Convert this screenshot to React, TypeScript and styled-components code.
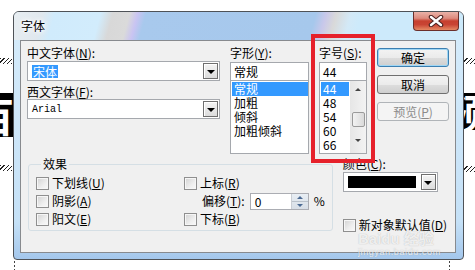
import styled, { createGlobalStyle, css } from "styled-components";

const GlobalStyle = createGlobalStyle`
  html, body {
    margin: 0;
    padding: 0;
    background: #fff;
  }
  body {
    width: 475px;
    height: 270px;
    overflow: hidden;
    font-family: "Noto Sans CJK SC", "Noto Sans", sans-serif;
    font-size: 12px;
    color: #000;
  }
`;

const Desk = styled.div`
  position: relative;
  width: 475px;
  height: 270px;
  overflow: hidden;
  background: #fff;
`;

// page content behind the dialog, only its edges show
const Band = styled.div<{ $side: "left" | "right"; $top: number; $h: number }>`
  position: absolute;
  top: ${(p) => p.$top}px;
  height: ${(p) => p.$h}px;
  width: ${(p) => (p.$side === "left" ? 13 : 12)}px;
  ${(p) => (p.$side === "left" ? "left: 0;" : "right: 0;")}
  background: #000;
  overflow: hidden;
  display: flex;
  align-items: center;
  justify-content: ${(p) => (p.$side === "left" ? "flex-end" : "flex-start")};
  color: #fff;
  font-size: 40px;
  font-weight: bold;
  line-height: 40px;
  span {
    flex: none;
    margin: ${(p) => (p.$side === "left" ? "0 -1px 0 0" : "0 0 0 -16px")};
  }
`;

const Hatch = styled.div<{ $side: "left" | "right"; $top: number }>`
  position: absolute;
  top: ${(p) => p.$top}px;
  ${(p) => (p.$side === "left" ? "left: 0;" : "right: 0;")}
  width: 12px;
  height: 6px;
  background: repeating-linear-gradient(
    -45deg,
    #222 0px,
    #222 1px,
    transparent 1px,
    transparent 3px
  );
`;

const DashLine = styled.div<{ $left: number }>`
  position: absolute;
  left: ${(p) => p.$left}px;
  top: 261px;
  width: 1px;
  height: 9px;
  background: repeating-linear-gradient(to bottom, #444 0 2px, transparent 2px 4px);
`;

const Window = styled.div`
  position: absolute;
  left: 13px;
  top: 11px;
  width: 451px;
  height: 249px;
  box-sizing: border-box;
  border: 1px solid #4e5257;
  border-radius: 6px 6px 4px 4px;
  background: linear-gradient(to bottom, #d6ecfb 0%, #c5e1f7 85%, #a4c7ec 100%);
  display: flex;
  flex-direction: column;
`;

const TitleBar = styled.div`
  height: 28px;
  flex: none;
  display: flex;
  justify-content: space-between;
  align-items: flex-start;
  border-radius: 5px 5px 0 0;
  background: linear-gradient(
    105deg,
    #e8eef2 0px,
    #e0e8ee 28px,
    #d0ebfc 40px,
    #d2ecfc 84px,
    #d8d8d8 96px,
    #dadada 112px,
    #c9c4f2 120px,
    #a8c9ed 128px,
    #a6c8ec 292px,
    #c9c8ea 302px,
    #d9d9d9 312px,
    #d3e9f7 326px,
    #cdeafb 336px,
    #cdeafb 100%
  );
`;

const Title = styled.div`
  margin: 7px 0 0 7px;
  line-height: 14px;
  text-shadow: 0 0 6px #fff, 0 0 6px #fff, 0 0 3px #fff;
`;

const CloseButton = styled.div`
  width: 46px;
  height: 19px;
  margin-right: 4px;
  box-sizing: border-box;
  border: 1px solid #6b2f2b;
  border-top: none;
  border-radius: 0 0 4px 4px;
  background: linear-gradient(
    to bottom,
    #eab2a8 0%,
    #dd8a7d 35%,
    #c7402f 50%,
    #c94434 70%,
    #e58a64 100%
  );
  display: flex;
  align-items: center;
  justify-content: center;
`;

const Client = styled.div`
  flex: 1;
  margin: 0 7px 6px 6px;
  box-sizing: border-box;
  border: 1px solid #878a8e;
  background: #f0f0f0;
  padding: 5px 0 0 6px;
`;

const TopRow = styled.div`
  display: flex;
  align-items: flex-start;
  gap: 10px;
`;

const Column = styled.div<{ $w: number }>`
  width: ${(p) => p.$w}px;
  flex: none;
  display: flex;
  flex-direction: column;
`;

const ButtonColumn = styled(Column)`
  padding-top: 2px;
  gap: 8px;
`;

const Label = styled.div<{ $mt?: number; $mb?: number }>`
  line-height: 14px;
  height: 14px;
  white-space: nowrap;
  margin-top: ${(p) => p.$mt ?? 0}px;
  margin-bottom: ${(p) => p.$mb ?? 0}px;
`;

const Combo = styled.div<{ $mono?: boolean }>`
  height: 20px;
  box-sizing: border-box;
  border: 1px solid #a5a8ad;
  background: #fff;
  display: flex;
  align-items: center;
  padding: 0 1px 0 4px;
  ${(p) =>
    p.$mono &&
    css`
      font-family: "Liberation Mono", "DejaVu Sans Mono", monospace;
      font-size: 10px;
    `}
`;

const Selected = styled.span`
  background: #3399ff;
  color: #fff;
  line-height: 13px;
  padding: 0 1px;
`;

const DropButton = styled.div`
  margin-left: auto;
  width: 15px;
  height: 16px;
  box-sizing: border-box;
  border: 1px solid #6f6f6f;
  background: linear-gradient(to bottom, #f4f4f4, #dcdcdc);
  box-shadow: inset 1px 1px 0 #fff;
  display: flex;
  align-items: center;
  justify-content: center;
  &::after {
    content: "";
    width: 0;
    height: 0;
    margin-top: 1px;
    border-left: 4px solid transparent;
    border-right: 4px solid transparent;
    border-top: 4px solid #000;
  }
`;

const TextBox = styled.div`
  height: 19px;
  box-sizing: border-box;
  border: 1px solid #a5a8ad;
  background: #fff;
  line-height: 17px;
  padding-left: 3px;
`;

const ListBox = styled.div`
  height: 74px;
  margin-top: -1px;
  box-sizing: border-box;
  border: 1px solid #a5a8ad;
  background: #fff;
  display: flex;
  padding: 1px 0 0 1px;
  overflow: hidden;
`;

const Items = styled.div`
  flex: 1;
  display: flex;
  flex-direction: column;
`;

const Item = styled.div<{ $on?: boolean }>`
  line-height: 14px;
  height: 14px;
  padding-left: 2px;
  white-space: nowrap;
  ${(p) =>
    p.$on &&
    css`
      background: #3399ff;
      color: #fff;
    `}
`;

const ScrollBar = styled.div`
  width: 16px;
  margin: -1px 0 0 1px;
  flex: none;
  background: linear-gradient(to right, #e6e6e6, #f3f3f3);
  display: flex;
  flex-direction: column;
  align-items: center;
`;

const Arrow = styled.div<{ $down?: boolean }>`
  width: 0;
  height: 0;
  margin-top: ${(p) => (p.$down ? 12 : 7)}px;
  border-left: 3px solid transparent;
  border-right: 3px solid transparent;
  ${(p) => (p.$down ? "border-top: 3px solid #444;" : "border-bottom: 3px solid #444;")}
`;

const Thumb = styled.div`
  width: 13px;
  height: 15px;
  margin-top: 21px;
  box-sizing: border-box;
  border: 1px solid #9a9a9a;
  border-radius: 2px;
  background: linear-gradient(to right, #f2f2f2, #dadada);
`;

const Button = styled.div<{ $variant?: "default" | "disabled" }>`
  height: 19px;
  box-sizing: border-box;
  border: 1px solid #707070;
  border-radius: 3px;
  background: linear-gradient(to bottom, #f3f3f3 0%, #ebebeb 50%, #dddddd 51%, #cfcfcf 100%);
  text-align: center;
  line-height: 17px;
  ${(p) =>
    p.$variant === "default" &&
    css`
      border-color: #3c7fb1;
      box-shadow: inset 0 0 0 1px #9fd6f4;
    `}
  ${(p) =>
    p.$variant === "disabled" &&
    css`
      border-color: #b0b4b8;
      background: #f4f4f4;
      color: #8b8b8b;
    `}
`;

const BottomRow = styled.div`
  display: flex;
  gap: 10px;
  margin-top: 3px;
  padding-left: 1px;
`;

const Group = styled.fieldset`
  width: 303px;
  height: 74px;
  box-sizing: border-box;
  margin: 0;
  padding: 3px 7px 2px 7px;
  border: 1px solid #d5dfe5;
  border-radius: 3px;
  display: grid;
  grid-template-columns: 148px 1fr;
  grid-auto-rows: 18px;
  align-items: center;
`;

const Legend = styled.legend`
  margin-left: 5px;
  padding: 0 2px;
  line-height: 14px;
`;

const CheckRow = styled.div<{ $indent?: number; $mt?: number }>`
  display: flex;
  align-items: center;
  gap: 3px;
  white-space: nowrap;
  padding-left: ${(p) => p.$indent ?? 0}px;
  margin-top: ${(p) => p.$mt ?? 0}px;
  line-height: 14px;
`;

const CheckBox = styled.span`
  width: 13px;
  height: 13px;
  flex: none;
  box-sizing: border-box;
  border: 1px solid #8f8f8f;
  background: linear-gradient(135deg, #d2d2d2 0%, #eeeeee 60%, #fafafa 100%);
  box-shadow: inset 0 0 0 1px #f6f6f6;
`;

const Spin = styled.div`
  width: 59px;
  height: 17px;
  margin-left: 2px;
  box-sizing: border-box;
  border: 1px solid #abadb3;
  background: #fff;
  display: flex;
  line-height: 15px;
`;

const SpinValue = styled.span`
  flex: 1;
  padding-left: 4px;
`;

const SpinButtons = styled.div`
  width: 16px;
  display: flex;
  flex-direction: column;
  background: linear-gradient(to bottom, #e8eef4, #d7dee6);
  border-left: 1px solid #c9ced4;
`;

const SpinHalf = styled.div<{ $down?: boolean }>`
  flex: 1;
  display: flex;
  align-items: center;
  justify-content: center;
  ${(p) => (p.$down ? "border-top: 1px solid #b9c1ca;" : "")}
  &::after {
    content: "";
    width: 0;
    height: 0;
    border-left: 3px solid transparent;
    border-right: 3px solid transparent;
    ${(p) => (p.$down ? "border-top: 3px solid #4b6a93;" : "border-bottom: 3px solid #4b6a93;")}
  }
`;

const Percent = styled.span`
  margin-left: 2px;
`;

const Swatch = styled.div`
  width: 68px;
  height: 12px;
  background: #000;
`;

const Marker = styled.div`
  position: absolute;
  left: 297px;
  top: 22px;
  width: 64px;
  height: 129px;
  box-sizing: border-box;
  border: 4px solid #e6212b;
  pointer-events: none;
`;

const Watermark = styled.div`
  position: absolute;
  left: 344px;
  top: 220px;
  color: rgba(255, 255, 255, 0.8);
  text-shadow: 0 0 1px rgba(110, 110, 110, 0.5);
  font-family: "Liberation Sans", "Noto Sans CJK SC", sans-serif;
  pointer-events: none;
  line-height: 1;
  b {
    display: block;
    font-size: 15px;
    line-height: 13px;
    height: 13px;
  }
  small {
    display: block;
    margin-top: 3px;
    font-size: 9px;
    line-height: 9px;
    letter-spacing: 0.6px;
  }
`;

const Key = ({ k }: { k: string }) => (
  <>
    (<u>{k}</u>)
  </>
);

const Check = ({ text, k }: { text: string; k: string }) => (
  <CheckRow>
    <CheckBox />
    <span>
      {text}
      <Key k={k} />
    </span>
  </CheckRow>
);

export default function App() {
  return (
    <Desk>
      <GlobalStyle />
      <Hatch $side="left" $top={58} />
      <Hatch $side="left" $top={165} />
      <Hatch $side="right" $top={58} />
      <Hatch $side="right" $top={166} />
      <Band $side="left" $top={93} $h={44}>
        <span>百</span>
      </Band>
      <Band $side="right" $top={93} $h={37}>
        <span>预</span>
      </Band>
      <DashLine $left={14} />
      <DashLine $left={449} />

      <Window>
        <TitleBar>
          <Title>字体</Title>
          <CloseButton>
            <svg width="16" height="12" viewBox="0 0 16 12">
              <path d="M3 2 L13 10 M13 2 L3 10" stroke="#4a2220" strokeWidth="4.5" strokeLinecap="round" />
              <path d="M3 2 L13 10 M13 2 L3 10" stroke="#fff" strokeWidth="2.4" strokeLinecap="round" />
            </svg>
          </CloseButton>
        </TitleBar>

        <Client>
          <TopRow>
            <Column $w={193}>
              <Label $mb={1}>
                中文字体<Key k="N" />:
              </Label>
              <Combo>
                <Selected>宋体</Selected>
                <DropButton />
              </Combo>
              <Label $mt={4}>
                西文字体<Key k="F" />:
              </Label>
              <Combo $mono>
                Arial
                <DropButton />
              </Combo>
            </Column>

            <Column $w={79}>
              <Label $mb={2}>
                字形<Key k="Y" />:
              </Label>
              <TextBox>常规</TextBox>
              <ListBox>
                <Items>
                  <Item $on>常规</Item>
                  <Item>加粗</Item>
                  <Item>倾斜</Item>
                  <Item>加粗倾斜</Item>
                </Items>
              </ListBox>
            </Column>

            <Column $w={48}>
              <Label $mb={2}>
                字号<Key k="S" />:
              </Label>
              <TextBox>44</TextBox>
              <ListBox>
                <Items>
                  <Item $on>44</Item>
                  <Item>48</Item>
                  <Item>54</Item>
                  <Item>60</Item>
                  <Item>66</Item>
                </Items>
                <ScrollBar>
                  <Arrow />
                  <Thumb />
                  <Arrow $down />
                </ScrollBar>
              </ListBox>
            </Column>

            <ButtonColumn $w={72}>
              <Button $variant="default">确定</Button>
              <Button>取消</Button>
              <Button $variant="disabled">
                预览<Key k="P" />
              </Button>
            </ButtonColumn>
          </TopRow>

          <BottomRow>
            <Group>
              <Legend>效果</Legend>
              <Check text="下划线" k="U" />
              <Check text="上标" k="R" />
              <Check text="阴影" k="A" />
              <CheckRow $indent={18}>
                <span>
                  偏移<Key k="T" />:
                </span>
                <Spin>
                  <SpinValue>0</SpinValue>
                  <SpinButtons>
                    <SpinHalf />
                    <SpinHalf $down />
                  </SpinButtons>
                </Spin>
                <Percent>%</Percent>
              </CheckRow>
              <Check text="阳文" k="E" />
              <Check text="下标" k="B" />
            </Group>

            <Column $w={95}>
              <Label $mb={1}>
                颜色<Key k="C" />:
              </Label>
              <Combo>
                <Swatch />
                <DropButton />
              </Combo>
              <CheckRow $mt={26}>
                <CheckBox />
                <span>
                  新对象默认值<Key k="D" />
                </span>
              </CheckRow>
            </Column>
          </BottomRow>
        </Client>

        <Marker />
        <Watermark>
          <b>Baidu 经验</b>
          <small>jingyan.baidu.com</small>
        </Watermark>
      </Window>
    </Desk>
  );
}
